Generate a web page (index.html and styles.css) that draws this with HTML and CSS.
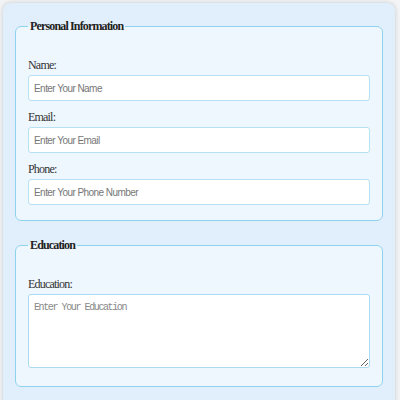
FILE: index.html
```html
<!DOCTYPE html>
<html>
<head>
<meta charset="utf-8">
<link rel="stylesheet" href="styles.css">
</head>
<body>
<form class="card">
  <fieldset class="group">
    <legend class="group-title">Personal Information</legend>
    <label class="field-label" for="name">Name:</label>
    <input class="field-input" id="name" type="text" placeholder="Enter Your Name">
    <label class="field-label" for="email">Email:</label>
    <input class="field-input" id="email" type="email" placeholder="Enter Your Email">
    <label class="field-label" for="phone">Phone:</label>
    <input class="field-input last" id="phone" type="tel" placeholder="Enter Your Phone Number">
  </fieldset>
  <fieldset class="group group-edu">
    <legend class="group-title">Education</legend>
    <label class="field-label" for="edu">Education:</label>
    <textarea class="field-area" id="edu" placeholder="Enter Your Education"></textarea>
  </fieldset>
</form>
</body>
</html>
```
FILE: styles.css
```css
html, body {
  margin: 0;
  padding: 0;
}
body {
  background: #f3f4f5;
  padding: 3px 0 0 3px;
  font-family: "Liberation Serif", "Times New Roman", serif;
  color: #333;
}
.card {
  width: 392px;
  box-sizing: border-box;
  background: #e1effd;
  border-radius: 8px;
  box-shadow: 0 0 5px rgba(0, 0, 0, 0.18);
  padding: 16px 12px 20px;
  min-height: 420px;
}
.group {
  margin: 0 0 17px;
  padding: 25px 12px 15px;
  border: 1px solid #8fd2ee;
  border-radius: 6px;
  background: #eef6fe;
  min-width: 0;
}
.group-edu {
  padding-bottom: 18px;
}
.group-title {
  padding: 0 2px;
  font-weight: bold;
  font-size: 12px;
  line-height: 14px;
  letter-spacing: -0.85px;
  color: #222;
}
.field-label {
  display: block;
  font-size: 12px;
  line-height: 14px;
  letter-spacing: -0.8px;
  color: #333;
  margin-bottom: 3px;
}
.field-input {
  display: block;
  width: 100%;
  box-sizing: border-box;
  height: 26px;
  margin: 0 0 9px;
  padding: 0 5px;
  border: 1px solid #b6e1f3;
  border-radius: 3px;
  background: #fff;
  font-family: "Liberation Sans", Arial, sans-serif;
  font-size: 10px;
  outline: none;
}
.field-input.last {
  margin-bottom: 0;
}
.field-input::placeholder {
  color: #777;
  letter-spacing: -0.55px;
}
.field-area {
  display: block;
  width: 100%;
  box-sizing: border-box;
  height: 74px;
  margin: 0;
  padding: 7px 5px;
  border: 1px solid #a9dcf0;
  border-radius: 3px;
  background: #fff;
  font-family: "Liberation Mono", "Courier New", monospace;
  font-size: 10px;
  outline: none;
}
.field-area::placeholder {
  color: #888;
  letter-spacing: -1.4px;
}
```
